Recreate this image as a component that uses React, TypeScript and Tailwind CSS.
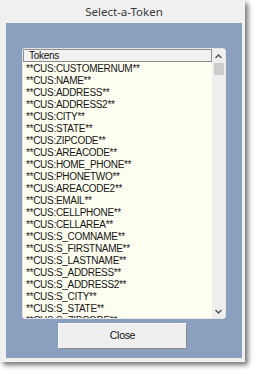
const tokens = [
  "CUSTOMERNUM",
  "NAME",
  "ADDRESS",
  "ADDRESS2",
  "CITY",
  "STATE",
  "ZIPCODE",
  "AREACODE",
  "HOME_PHONE",
  "PHONETWO",
  "AREACODE2",
  "EMAIL",
  "CELLPHONE",
  "CELLAREA",
  "S_COMNAME",
  "S_FIRSTNAME",
  "S_LASTNAME",
  "S_ADDRESS",
  "S_ADDRESS2",
  "S_CITY",
  "S_STATE",
  "S_ZIPCODE",
  "S_AREACODE",
];

function Chevron({ up }: { up?: boolean }) {
  return (
    <svg width="7" height="5" viewBox="0 0 7 5" className="block">
      <path
        d={up ? "M0.5 4 L3.5 1 L6.5 4" : "M0.5 1 L3.5 4 L6.5 1"}
        fill="none"
        stroke="#555"
        strokeWidth="1.4"
      />
    </svg>
  );
}

export default function App() {
  return (
    <div className="w-[257px] h-[374px] bg-white overflow-hidden">
      <div className="w-[245px] h-[362px] bg-[#f0f0f0] shadow-[3px_3px_5px_rgba(0,0,0,0.55)] flex flex-col pl-[6px] pr-[3px] pb-[4px]">
        <div className="h-[23px] flex items-center justify-center text-[11.5px] text-[#3a3a3a] font-['Noto_Sans',sans-serif]">
          Select-a-Token
        </div>

        <div className="flex-1 bg-[#8aa0be] flex flex-col pt-[25px] px-[16px] font-['Liberation_Sans',Arial,sans-serif]">
          {/* token list */}
          <div className="h-[271px] flex bg-[#fefef1] border border-[#e4e4e4] rounded-[3px] overflow-hidden">
            <div className="flex-1 flex flex-col min-w-0">
              <div className="h-[13px] shrink-0 border border-[#8e8e8e] bg-[#f2f2f2] pl-[5px] text-[10px] leading-[11px] tracking-[-0.3px] text-[#111]">
                Tokens
              </div>
              <div className="flex-1 overflow-hidden pl-[3px] pt-[1px]">
                {tokens.map((t) => (
                  <div
                    key={t}
                    className="h-[12px] text-[10px] leading-[12px] tracking-[-0.3px] text-[#141414] whitespace-nowrap"
                  >
                    **CUS:{t}**
                  </div>
                ))}
              </div>
            </div>

            {/* scrollbar */}
            <div className="w-[13px] shrink-0 bg-[#efefef] flex flex-col items-center">
              <div className="h-[14px] flex items-center justify-center">
                <Chevron up />
              </div>
              <div className="w-[10px] h-[12px] bg-[#cdcdcd]" />
              <div className="flex-1" />
              <div className="h-[14px] flex items-center justify-center">
                <Chevron />
              </div>
            </div>
          </div>

          <button
            type="button"
            className="mt-[4px] ml-[36px] w-[129px] h-[26px] bg-[#efefef] border border-t-[#fbfbfb] border-l-[#fbfbfb] border-r-[#8c8c8c] border-b-[#8c8c8c] text-[10.5px] tracking-[-0.3px] text-[#111] flex items-center justify-center"
          >
            Close
          </button>
        </div>
      </div>
    </div>
  );
}
